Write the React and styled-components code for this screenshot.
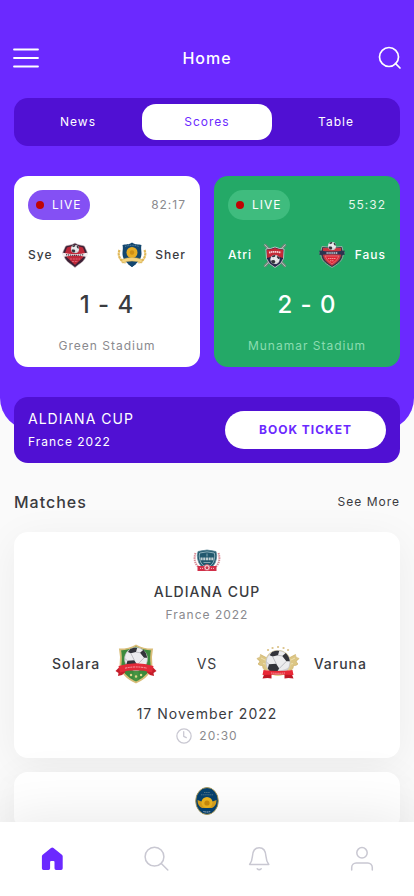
import React, { useState } from "react";
import styled, { createGlobalStyle } from "styled-components";

const COLORS = {
  primary: "#6b29ff",
  primaryDark: "#5010d3",
  green: "#24a967",
  text: "#3a3b3f",
  muted: "#8a8a8e",
  icon: "#c9c8d2"
};

const GlobalStyle = createGlobalStyle`
  * {
    box-sizing: border-box;
  }

  body {
    margin: 0;
    background: #fafafa;
    color: ${COLORS.text};
    font-family: Inter, "Liberation Sans", sans-serif;
    font-size: 12px;
    line-height: 14px;
    letter-spacing: 1px;
  }

  button {
    padding: 0;
    border: 0;
    background: none;
    color: inherit;
    font: inherit;
    letter-spacing: inherit;
    cursor: pointer;
  }

  h1, h2, h3, p {
    margin: 0;
    font-weight: 400;
  }

  svg {
    display: block;
    flex: none;
  }
`;

const Page = styled.div`
  padding-bottom: 88px;
`;

const Hero = styled.header`
  padding: 44px 14px 63px;
  border-radius: 0 0 32px 32px;
  background: ${COLORS.primary};
  color: #fff;
`;

const TopBar = styled.div`
  display: flex;
  align-items: center;
  justify-content: space-between;
  height: 28px;
  margin: 0 -2px 26px;
`;

const PageTitle = styled.h1`
  font-size: 16px;
  font-weight: 500;
  line-height: 20px;
`;

const Tabs = styled.div`
  display: grid;
  grid-template-columns: 1fr 130px 1fr;
  height: 48px;
  padding: 6px 0;
  border-radius: 14px;
  background: ${COLORS.primaryDark};
`;

const Tab = styled.button`
  border-radius: 14px;

  &[aria-selected="true"] {
    background: #fff;
    color: ${COLORS.primary};
  }
`;

const LiveGrid = styled.div`
  display: grid;
  grid-template-columns: 1fr 1fr;
  gap: 14px;
  margin-top: 30px;
`;

const LiveCard = styled.article`
  display: flex;
  flex-direction: column;
  gap: 20px;
  padding: 14px;
  border-radius: 14px;
  background: ${props => (props.$green ? COLORS.green : "#fff")};
  color: ${props => (props.$green ? "#fff" : COLORS.text)};
`;

const Row = styled.div`
  display: flex;
  align-items: center;
  justify-content: space-between;
`;

const LiveBadge = styled.span`
  display: flex;
  align-items: center;
  gap: 8px;
  height: 30px;
  padding: 0 8px;
  border-radius: 15px;
  background: ${props => (props.$green ? "#3fbc7e" : "#8450f4")};
  color: #fff;
`;

const LiveDot = styled.span`
  width: 8px;
  height: 8px;
  border-radius: 50%;
  background: #c00404;
`;

const Clock = styled.span`
  color: ${props => (props.$green ? "#e4f6ec" : COLORS.muted)};
`;

const LiveTeam = styled.span`
  display: flex;
  align-items: center;
  gap: 8px;
  font-weight: 500;
`;

const Score = styled.p`
  font-size: 24px;
  font-weight: 500;
  line-height: 29px;
  text-align: center;
`;

const Stadium = styled.p`
  text-align: center;
  color: ${props => (props.$green ? "#8bdcb0" : COLORS.muted)};
`;

const Booking = styled.section`
  display: flex;
  align-items: center;
  justify-content: space-between;
  margin: -33px 14px 0;
  padding: 14px;
  border-radius: 14px;
  background: ${COLORS.primaryDark};
  color: #fff;
`;

const CupName = styled.h3`
  font-size: 14px;
  font-weight: ${props => (props.$strong ? 500 : 400)};
  line-height: 16px;
`;

const CupPlace = styled.p`
  margin-top: 8px;
  color: ${props => (props.$muted ? COLORS.muted : "inherit")};
`;

const BookButton = styled.button`
  width: 161px;
  height: 38px;
  border-radius: 19px;

  && {
    background: #fff;
    color: ${COLORS.primary};
    font-weight: 700;
  }
`;

const SectionHead = styled.div`
  display: flex;
  align-items: center;
  justify-content: space-between;
  margin: 29px 14px 20px;
`;

const SectionTitle = styled.h2`
  font-size: 16px;
  font-weight: 500;
  line-height: 20px;
`;

const SeeMore = styled.a`
  color: inherit;
  text-decoration: none;
`;

const MatchList = styled.div`
  display: grid;
  gap: 14px;
  padding: 0 14px;
`;

const MatchCard = styled.article`
  display: flex;
  flex-direction: column;
  align-items: center;
  padding: 14px 0;
  border-radius: 14px;
  background: #fff;
  box-shadow: 0 8px 40px rgba(0, 0, 0, 0.06);

  ${CupName} {
    margin-top: 8px;
  }
`;

const Versus = styled.div`
  display: flex;
  align-items: center;
  justify-content: space-between;
  align-self: stretch;
  margin: 20px 0;
  padding: 0 33px 0 38px;
  font-size: 14px;
`;

const MatchTeam = styled.span`
  display: flex;
  align-items: center;
  gap: 14px;
  font-weight: 500;
`;

const MatchDate = styled.p`
  font-size: 14px;
  line-height: 16px;
`;

const MatchTime = styled.p`
  display: flex;
  align-items: center;
  gap: 7px;
  margin-top: 6px;
  line-height: 16px;
  color: ${COLORS.muted};

  svg {
    color: ${COLORS.icon};
  }
`;

const BottomNav = styled.nav`
  position: fixed;
  right: 0;
  bottom: 0;
  left: 0;
  display: grid;
  grid-template-columns: repeat(4, 1fr);
  height: 74px;
  background: #fff;
  box-shadow: 0 0 60px rgba(0, 0, 0, 0.1);
`;

const NavButton = styled.button`
  display: grid;
  place-items: center;

  && {
    color: ${props => (props.$active ? COLORS.primary : COLORS.icon)};
  }
`;

const Line = ({ size = 28, width = 1.5, children }) => (
  <svg
    width={size}
    height={size}
    viewBox="0 0 28 28"
    fill="none"
    stroke="currentColor"
    strokeWidth={width}
    strokeLinecap="round"
    strokeLinejoin="round"
    aria-hidden="true"
  >
    {children}
  </svg>
);

const MenuIcon = () => (
  <Line width={1.8}>
    <path d="M2 5.5h24M2 14h24M2 22.5h24" />
  </Line>
);

const SearchIcon = () => (
  <Line width={1.7}>
    <circle cx="15" cy="13" r="9.5" />
    <path d="M21.4 19.4l4.6 4.6" />
  </Line>
);

const NavSearchIcon = () => (
  <Line>
    <circle cx="13.5" cy="11.7" r="9.4" />
    <path d="M20.3 18.5l6.5 6.5" />
  </Line>
);

const HomeIcon = () => (
  <svg width="28" height="28" viewBox="0 0 28 28" fill="currentColor" aria-hidden="true">
    <path d="M13 3.1a2 2 0 0 1 2.500 0l8.400 6.600a2 2 0 0 1 .8 1.600v12a1.600 1.600 0 0 1-1.600 1.600h-5a1.600 1.600 0 0 1-1.600-1.600v-6.200a1 1 0 0 0-1-1h-2.400a1 1 0 0 0-1 1v6.200a1.600 1.600 0 0 1-1.600 1.600h-5a1.600 1.600 0 0 1-1.600-1.600v-12a2 2 0 0 1 .8-1.600z" />
  </svg>
);

const BellIcon = () => (
  <Line>
    <path d="M4.600 19.500h19.200c-1.600-2.200-2.600-4.800-2.800-8C20.700 6.200 18.600 2.800 14.200 2.800S7.700 6.200 7.400 11.500c-.2 3.200-1.200 5.800-2.800 8z" />
    <path d="M12.200 23.700c1.100 1.100 2.900 1.100 4 0" />
  </Line>
);

const UserIcon = () => (
  <Line>
    <circle cx="14" cy="7.800" r="5.200" />
    <path d="M3.700 25v-2.600a4.500 4.500 0 0 1 4.500-4.500h11.600a4.500 4.500 0 0 1 4.500 4.500V25" />
  </Line>
);

const ClockIcon = () => (
  <Line size={16} width={2.2}>
    <circle cx="14" cy="14" r="12.500" />
    <path d="M13.500 6.500v8.200l4.500 2.200" />
  </Line>
);

// Soccer ball drawn around its own centre, radius 10
const Ball = ({ x, y, scale = 1 }) => (
  <g transform={`translate(${x} ${y}) scale(${scale})`}>
    <circle r="10" fill="#ececee" stroke="#b4b4b8" strokeWidth="0.5" />
    <path d="M-9 4Q-5 9 2 9.800 7 8.500 9.300 3.500 3 9-9 4z" fill="#cfcfd2" />
    <path
      d="M-5-8.700Q-1-10.500 1-9.500L0-6-4.500-5-7-6zM3.500-5.500L6.500-8Q9.500-5 9.800-1L7-1zM-7.500 1.500L-1.500 1 1 5-2 9.500Q-6 9-8.500 5z"
      fill="#33343a"
    />
    <path d="M0-6l3.500.5M7-1L3 3l-2 2M-1.500 1L-4.500-5M-7.500 1.500l-2.300-2" fill="none" stroke="#a9a9ae" strokeWidth="0.6" />
  </g>
);

const RedShield = () => (
  <>
    <path d="M15 3c3 2.500 7 1.800 9.500 3.200L27.500 13 25 18.500C22.500 23 18 24.500 15 27.500c-3-3-7.500-4.500-10-9L2.500 13l3-6.800C8 4.800 12 5.500 15 3z" fill="#3d2135" stroke="#c9b9bf" strokeWidth="0.6" />
    <path d="M15 4.800c3 2 5.500 1.700 8 2.700L25 13l-2 4.500-8 7.500-8-7.500L5 13l2-5.500c2.500-1 5-.7 8-2.700z" fill="#bf2839" />
    <Ball x={15} y={9} scale={0.4} />
    <path d="M2 12.500q13 3.500 26 0l-1 4.500q-12-3-24 0z" fill="#f5eef0" />
    <path d="M6 14.600q9 1.500 18 0" stroke="#4a3440" strokeWidth="1.2" strokeDasharray="1.300 .7" fill="none" />
    <path d="M10 19h10M12 21.500h6" stroke="#ed7c8a" strokeWidth="0.7" strokeDasharray="2 .8" />
  </>
);

const GoldShield = () => (
  <>
    <path d="M15 2.500c3 2.500 6.500 1.500 9.500 2.500-.8 3.500 0 5 0 8.500 0 6.500-5 10-9.500 13.500C10.500 23.500 5.500 20 5.500 13.500c0-3.500.8-5 0-8.500 3-1 6.500 0 9.500-2.500z" fill="#14476f" />
    <path d="M8 6.500q7-2.400 14 0" fill="none" stroke="#6d98ae" strokeWidth="0.8" strokeDasharray="1 .7" />
    <circle cx="15" cy="12.500" r="5.500" fill="#e8ad24" />
    <circle cx="15" cy="12.500" r="2.200" fill="#cf8f14" />
    <path d="M2.500 10C.5 15 2.500 20.500 8.500 23M27.500 10c2 5 0 10.500-6 13" fill="none" stroke="#e1b857" strokeWidth="2.2" strokeDasharray="2.600 .5" />
    <path d="M5 19.500q10-4 20 0v3.500q-10-4-20 0z" fill="#f4d581" stroke="#d0aa50" strokeWidth="0.5" />
    <path d="M11 24q4-2 8 0l-4 3z" fill="#14476f" />
  </>
);

const CrossShield = () => (
  <>
    <path d="M4.500 4.500l21 22M25.500 4.500l-21 22" stroke="#6f8479" strokeWidth="3" />
    <path d="M4.500 4.500l21 22M25.500 4.500l-21 22" stroke="#b5c6bc" strokeWidth="1" />
    <path d="M6 9q4.500 0 9-2 4.500 2 9 2l-.5 9.500Q22 24 15 27.500 8 24 6.500 18.500z" fill="#26264a" stroke="#dad8d7" strokeWidth="0.8" />
    <path d="M6.800 9.800q4.200 0 8.200-1.800 4 1.800 8.200 1.800l-.4 8.200-7.800-2.500L7.200 18z" fill="#c42a36" />
    <path d="M9 12.600q6-1.600 12 0" fill="none" stroke="#f3d3d3" strokeWidth="1.800" strokeDasharray="1.500 .5" />
    <Ball x={15} y={19.5} scale={0.46} />
  </>
);

const CrownShield = () => (
  <>
    <path d="M5 6.500l6 .5 4-3 4 3 6-.5 1 4.500 1.500 1.500-1.500 3C25.500 21 20 24.500 15 27.500 10 24.500 4.500 21 4 15.500L2.500 12.500 4 11z" fill="#3a3848" stroke="#a9bdb3" strokeWidth="0.8" />
    <path d="M6 8h18v7c-.5 5-5 8-9 10.800C11 23 6.500 20 6 15z" fill="#c93641" />
    <path d="M8 16h14q-1.500 4.500-7 8-5.500-3.500-7-8z" fill="#dc2636" stroke="#f58a8e" strokeWidth="0.6" />
    <Ball x={15} y={6} scale={0.4} />
    <path d="M2.500 10.500q12.500 2 25 0v4.500q-12.500-1.500-25 0z" fill="#2c3450" />
    <path d="M9.500 13h11" fill="none" stroke="#d4d8de" strokeWidth="1.400" strokeDasharray="1.300 .6" />
    <path d="M11 18.500h8M13 20.800h4" stroke="#f7a9a9" strokeWidth="0.8" strokeDasharray="1.500 .5" />
  </>
);

const BlueCup = () => (
  <>
    <path d="M3.500 7q-3 9 4 15M26.500 7q3 9-4 15" fill="none" stroke="#d98b96" strokeWidth="2" strokeDasharray="1.500 .7" />
    <path d="M6 5.500q9-3 18 0l.7 4Q24.500 18 19 21.500h-8Q5.500 18 5.300 9.500z" fill="#22586d" stroke="#5b8696" strokeWidth="0.8" />
    <path d="M7.700 7q7.300-2.300 14.600 0l.5 3Q22.500 17 18 20h-6Q7.500 17 7.200 10z" fill="none" stroke="#a5c3cb" strokeWidth="0.8" />
    <path d="M8.500 12.800h13" stroke="#c3d0d2" strokeWidth="2.800" strokeDasharray="2.100 .6" />
    <path d="M15 7.500v3M11.500 16.500h7" stroke="#8fb0b9" strokeWidth="0.9" />
    <path d="M5.500 20h19v5h-19z" fill="#d12f48" />
    <path d="M8 22.400h3M19 22.400h3" stroke="#f6c1c8" strokeDasharray="1 1" />
    <circle cx="15" cy="21.500" r="3" fill="#f3c9cf" stroke="#c93a4e" strokeWidth="0.6" />
    <path d="M15 20l1.500 1.200-.6 1.700h-1.800l-.6-1.700z" fill="#c93a4e" />
  </>
);

const OvalCup = () => (
  <>
    <ellipse cx="15" cy="15" rx="11.3" ry="13.5" fill="#07426f" stroke="#af9a54" strokeWidth="0.9" />
    <path d="M12 6.500h6M9 8.800h12" stroke="#5f7f8b" strokeWidth="0.8" strokeDasharray="1.500 .6" />
    <path d="M5.500 14l4 1.500 2-2.500h7l2 2.500 4-1.500q0 6-4.500 8H10q-4.500-2-4.500-8z" fill="#d7a01c" />
    <circle cx="15" cy="16.500" r="5.500" fill="#edb51f" />
    <circle cx="15" cy="17" r="2.600" fill="#c98b0c" />
    <path d="M11.500 25.500q3.500 1 7 0" fill="none" stroke="#c3cbd0" strokeDasharray="1.200 .5" />
  </>
);

const SolaraCrest = () => (
  <>
    <path d="M22 3.500q7 4 16 4Q36.500 14 37.500 23 36.500 34 22 40.500 7.500 34 6.500 23 7.500 14 6 7.500q9 0 16-4z" fill="#3b8a3c" stroke="#d9bd78" strokeWidth="1.800" />
    <path d="M22 5.500V39" stroke="#5aa44f" strokeWidth="5" opacity="0.4" />
    <Ball x={22} y={17} scale={1.15} />
    <path d="M1.500 29l4-4 6 5-3.500 3-4 1 .5-3zM42.500 29l-4-4-6 5 3.500 3 4 1-.5-3z" fill="#c51d2a" />
    <path d="M4.500 24q17.500-5.500 35 0l-1.500 6.500q-16-4.500-32 0z" fill="#e22a38" />
    <path d="M11 26.200q11-2.500 22 0" fill="none" stroke="#f6bcc0" strokeWidth="0.8" strokeDasharray="2 .7" />
    <path d="M17 33h.1M22 34.500h.1M27 33h.1" stroke="#dfd68a" strokeWidth="2.400" strokeLinecap="round" />
  </>
);

const VarunaCrest = () => (
  <>
    <path d="M13 17l-8.500-4.500q1 3-3.500 4 1.500 2 3 2.500-1 2.500-2 3 2 2 4.500 1.500 0 3 2 4.500l6-1zM31 17l8.500-4.500q-1 3 3.500 4-1.500 2-3 2.500 1 2.500 2 3-2 2-4.500 1.500 0 3-2 4.500l-6-1z" fill="#dcc684" stroke="#c9a95b" strokeWidth="0.6" />
    <path d="M5 16l8 4M7 21.500l6 1.500M39 16l-8 4M37 21.500l-6 1.500" stroke="#efe2b6" strokeWidth="0.9" />
    <path d="M12 8h.1M16.500 6h.1M22 5h.1M27.500 6h.1M32 8h.1" stroke="#dcc48c" strokeWidth="2.200" strokeLinecap="round" />
    <circle cx="22" cy="21" r="13" fill="#e5d08f" />
    <Ball x={22} y={20.5} scale={1.2} />
    <path d="M9 30l-2.500 6.500 5-.5 4 .5v-5zM35 30l2.500 6.500-5-.5-4 .5v-5z" fill="#bf1725" />
    <path d="M7.500 28q14.500 2 29 0l1 5q-15.500-1-31 0z" fill="#e82736" />
    <path d="M15 31q7 .6 14 0" fill="none" stroke="#f8b8bc" strokeWidth="0.8" strokeDasharray="1.500 .6" />
  </>
);

const CRESTS = {
  sye: RedShield,
  sher: GoldShield,
  atri: CrossShield,
  faus: CrownShield,
  aldiana: BlueCup,
  oval: OvalCup,
  solara: SolaraCrest,
  varuna: VarunaCrest
};

const Crest = ({ name, size = 30 }) => {
  const Drawing = CRESTS[name];
  return (
    <svg width={size} height={size} viewBox={`0 0 ${size} ${size}`} aria-hidden="true">
      <Drawing />
    </svg>
  );
};

const TABS = ["News", "Scores", "Table"];

const LIVE = [
  {
    home: { name: "Sye", crest: "sye" },
    away: { name: "Sher", crest: "sher" },
    time: "82:17",
    score: "1 - 4",
    stadium: "Green Stadium"
  },
  {
    home: { name: "Atri", crest: "atri" },
    away: { name: "Faus", crest: "faus" },
    time: "55:32",
    score: "2 - 0",
    stadium: "Munamar Stadium",
    green: true
  }
];

const NAV = [
  { label: "Home", Icon: HomeIcon },
  { label: "Search", Icon: NavSearchIcon },
  { label: "Notifications", Icon: BellIcon },
  { label: "Profile", Icon: UserIcon }
];

const LiveMatch = ({ home, away, time, score, stadium, green }) => (
  <LiveCard $green={green}>
    <Row>
      <LiveBadge $green={green}>
        <LiveDot />
        LIVE
      </LiveBadge>
      <Clock $green={green}>{time}</Clock>
    </Row>
    <Row>
      <LiveTeam>
        {home.name}
        <Crest name={home.crest} />
      </LiveTeam>
      <LiveTeam>
        <Crest name={away.crest} />
        {away.name}
      </LiveTeam>
    </Row>
    <Score>{score}</Score>
    <Stadium $green={green}>{stadium}</Stadium>
  </LiveCard>
);

export default () => {
  const [tab, setTab] = useState("Scores");
  const [page, setPage] = useState("Home");

  return (
    <>
      <GlobalStyle />
      <Page>
        <Hero>
          <TopBar>
            <button aria-label="Menu">
              <MenuIcon />
            </button>
            <PageTitle>Home</PageTitle>
            <button aria-label="Search">
              <SearchIcon />
            </button>
          </TopBar>
          <Tabs role="tablist">
            {TABS.map(name => (
              <Tab
                key={name}
                role="tab"
                aria-selected={tab === name}
                onClick={() => setTab(name)}
              >
                {name}
              </Tab>
            ))}
          </Tabs>
          <LiveGrid>
            {LIVE.map(match => (
              <LiveMatch key={match.stadium} {...match} />
            ))}
          </LiveGrid>
        </Hero>
        <Booking>
          <div>
            <CupName>ALDIANA CUP</CupName>
            <CupPlace>France 2022</CupPlace>
          </div>
          <BookButton>BOOK TICKET</BookButton>
        </Booking>
        <SectionHead>
          <SectionTitle>Matches</SectionTitle>
          <SeeMore href="#matches">See More</SeeMore>
        </SectionHead>
        <MatchList id="matches">
          <MatchCard>
            <Crest name="aldiana" />
            <CupName $strong>ALDIANA CUP</CupName>
            <CupPlace $muted>France 2022</CupPlace>
            <Versus>
              <MatchTeam>
                Solara
                <Crest name="solara" size={44} />
              </MatchTeam>
              <span>VS</span>
              <MatchTeam>
                <Crest name="varuna" size={44} />
                Varuna
              </MatchTeam>
            </Versus>
            <MatchDate>17 November 2022</MatchDate>
            <MatchTime>
              <ClockIcon />
              20:30
            </MatchTime>
          </MatchCard>
          <MatchCard>
            <Crest name="oval" />
          </MatchCard>
        </MatchList>
      </Page>
      <BottomNav>
        {NAV.map(({ label, Icon }) => (
          <NavButton
            key={label}
            aria-label={label}
            $active={page === label}
            onClick={() => setPage(label)}
          >
            <Icon />
          </NavButton>
        ))}
      </BottomNav>
    </>
  );
};
